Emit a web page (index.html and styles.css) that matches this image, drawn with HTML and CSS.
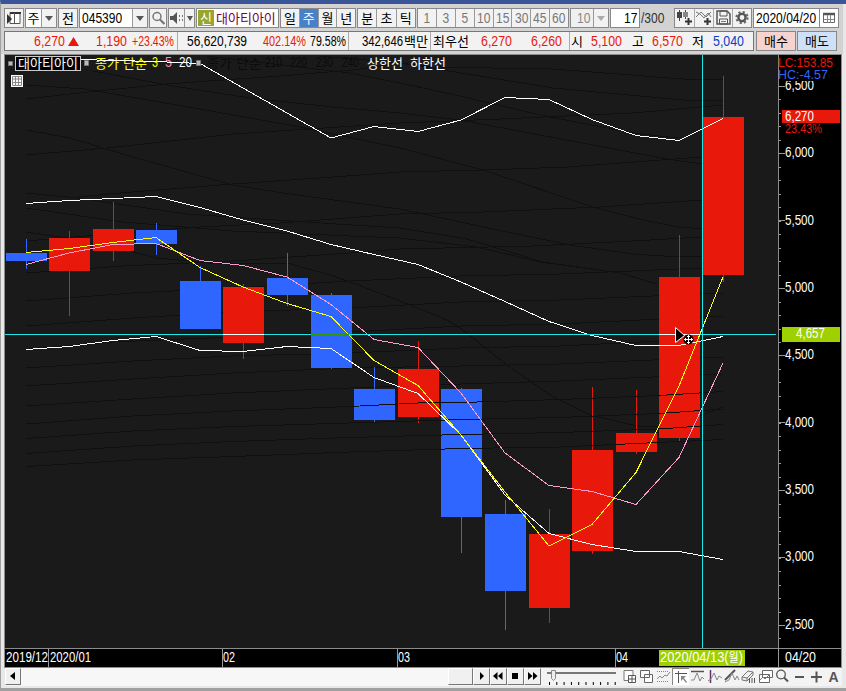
FILE: index.html
```html
<!DOCTYPE html>
<html lang="ko">
<head>
<meta charset="utf-8">
<title>대아티아이 주봉 차트</title>
<link rel="stylesheet" href="styles.css">
</head>
<body>
<div class="window">
  <header class="toolbar">
    <div class="box w20"><svg width="18" height="18"><path d="M5 3.500h10v11H5z" fill="#fff" stroke="#555"/><path d="M5 4h11" stroke="#333" stroke-width="2"/><path d="M9.500 4v10" stroke="#555"/><path d="M2 5l5 5-5 5z" fill="#333"/></svg></div>
    <div class="box combo w32"><span class="ko grow">주</span><span class="drop"></span></div>
    <div class="box w20"><span class="ko">전</span></div>
    <div class="box combo w69"><span class="grow num"><b>045390</b></span><span class="drop"></span></div>
    <div class="box w19"><svg width="16" height="16"><circle cx="7" cy="6.500" r="4" fill="none" stroke="#777" stroke-width="1.500"/><path d="M10 9.500l4.500 4.500" stroke="#777" stroke-width="2.200"/></svg></div>
    <div class="box combo w27 light"><svg class="grow" width="16" height="16"><path d="M1 6h3l4-4v12l-4-4H1z" fill="#555"/><path d="M10.500 5v6M13.500 5v6" stroke="#777" stroke-dasharray="2 2"/></svg><span class="drop slim"></span></div>
    <div class="box name"><span class="tag">신</span><span class="title">대아티아이</span></div>
    <div class="group period"><span>일</span><span class="on">주</span><span>월</span><span>년</span></div>
    <div class="group tick"><span>분</span><span>초</span><span>틱</span></div>
    <div class="group mins"><span><b>1</b></span><span><b>3</b></span><span><b>5</b></span><span><b>10</b></span><span><b>15</b></span><span><b>30</b></span><span><b>45</b></span><span><b>60</b></span></div>
    <div class="box combo off w39"><span class="grow num"><b>10</b></span><span class="drop"></span></div>
    <div class="box count"><b>17</b></div>
    <div class="total"><b>/300</b></div>
    <div class="group tools">
      <svg width="19" height="20"><path d="M4.500 2v11M10.500 2v9" stroke="#444"/><path d="M2 4h5v6H2z" fill="#444"/><path d="M8 4h5v5H8z" fill="#888"/><path d="M13.500 10v7M10 13.500h7" stroke="#333" stroke-width="2"/></svg>
      <svg width="19" height="20"><path d="M1 9l5-5 5 5 5-5M1 4l4 2 4 4 4-5 3 4" fill="none" stroke="#777"/><path d="M12.500 10v7M9 13.500h7" stroke="#333" stroke-width="2"/></svg>
      <svg width="19" height="20"><path d="M3 3h10l3 3v10H3z" fill="none" stroke="#555" stroke-width="1.500"/><path d="M6 3h7v5H6zM5.500 11h8v5h-8z" fill="none" stroke="#555"/><path d="M7 13.500h5" stroke="#777"/></svg>
      <svg width="19" height="20"><circle cx="9" cy="9.500" r="5.600" fill="none" stroke="#666" stroke-width="2" stroke-dasharray="2.200 2.200"/><circle cx="9" cy="9.500" r="3.600" fill="none" stroke="#555" stroke-width="2.400"/></svg>
    </div>
    <div class="box combo date"><span class="grow num"><b>2020/04/20</b></span><svg width="19" height="18"><path d="M3.500 4.500h11v9h-11z" fill="none" stroke="#666"/><path d="M3 5h12" stroke="#555" stroke-width="2.500"/><path d="M4 10.500h10M7.500 6v8M10.500 6v8" stroke="#888"/></svg></div>
  </header>

  <section class="quote">
    <div class="figures">
      <svg width="172" height="18"><g class="red"><text x="29" y="14" textLength="31" lengthAdjust="spacingAndGlyphs">6,270</text><path d="M63 14l5.500-9 5.500 9z"/><text x="91" y="14" textLength="31" lengthAdjust="spacingAndGlyphs">1,190</text><text x="127" y="14" textLength="42" lengthAdjust="spacingAndGlyphs">+23.43%</text></g></svg>
      <svg width="171" height="18"><text x="9" y="14" textLength="60" lengthAdjust="spacingAndGlyphs">56,620,739</text><text x="85" y="14" class="red" textLength="43" lengthAdjust="spacingAndGlyphs">402.14%</text><text x="132" y="14" textLength="36" lengthAdjust="spacingAndGlyphs">79.58%</text></svg>
      <svg width="82" height="18"><text x="13" y="14" textLength="41" lengthAdjust="spacingAndGlyphs">342,646</text><text x="55" y="14" class="kt" textLength="24">백만</text></svg>
      <svg width="139" height="18"><text x="2" y="14" class="kt">최우선</text><text x="50" y="14" class="red" textLength="31" lengthAdjust="spacingAndGlyphs">6,270</text><text x="100" y="14" class="red" textLength="31" lengthAdjust="spacingAndGlyphs">6,260</text></svg>
      <svg width="183" height="18"><text x="1" y="14" class="kt">시</text><text x="21" y="14" class="red" textLength="31" lengthAdjust="spacingAndGlyphs">5,100</text><text x="62" y="14" class="kt">고</text><text x="82" y="14" class="red" textLength="31" lengthAdjust="spacingAndGlyphs">6,570</text><text x="122" y="14" class="kt">저</text><text x="143" y="14" class="navy" textLength="31" lengthAdjust="spacingAndGlyphs">5,040</text></svg>
    </div>
    <div class="buy">매수</div>
    <div class="sell">매도</div>
  </section>

  <main class="chart">
  <svg width="838" height="614" viewBox="4 54 838 614">
    <rect x="4" y="54" width="838" height="614" fill="#8c8c8c"/>
    <rect x="5" y="55" width="773" height="593" fill="#1a1a1a"/>
    <rect x="779" y="55" width="62" height="593" fill="#000"/>
    <rect x="5" y="649" width="836" height="18" fill="#000"/>

    <g class="line faint">
      <path d="M26 85L85 89L200 109L300 127L400 148L483 170L593 207L643 220L678 227L703 229"/>
      <path d="M26 99L97 91L167 84L280 76L353 70L400 63L433 67L553 69L683 79L723 79"/>
      <path d="M93 71L173 86L250 98L333 107L400 113L460 120L593 145L667 159L702 164"/>
      <path d="M26 130L70 138L133 157L233 185L283 193L400 209L507 232L570 245L633 254L680 257L703 256"/>
      <path d="M26 155L107 148L233 134L400 123L500 119L633 113L723 105"/>
      <path d="M26 193L77 198L187 214L290 221L400 228L467 239L543 262L620 273L657 284"/>
      <path d="M26 208L123 222L233 231L350 236L400 238L477 247L540 262L620 273"/>
      <path d="M67 198L120 193L233 184L333 177L400 172L483 170L567 167L702 157"/>
      <path d="M26 241L110 234L200 227L280 223L400 214L483 212L600 207L702 200"/>
      <path d="M26 273L123 266L233 261L350 253L400 249L533 246L633 241L702 237"/>
      <path d="M207 56L350 73L400 83L460 96L540 115L633 133L678 138"/>
      <path d="M320 56L400 63L553 88L683 100L723 101"/>
      <path d="M26 232L80 240L133 252L157 258L220 264L287 263L330 275L350 282L400 301L447 320L463 330L507 365L550 395L590 415L637 426L660 427L700 416L723 407"/>
      <path d="M26 301L133 293L233 288L350 281L461 276L560 274L702 268"/>
      <path d="M26 326L133 318L233 312L350 308L461 302L560 300L723 293"/>
      <path d="M26 349L113 342L233 337L350 332L461 326L560 324L723 316"/>
      <path d="M26 368L133 361L233 356L350 353L461 348L560 346L723 338"/>
      <path d="M26 386L133 379L233 373L350 368L461 366L560 364L723 357"/>
      <path d="M26 406L133 399L233 393L350 388L461 384L560 381L723 374"/>
    </g>

    <g fill="#e8180a">
      <path d="M49 238h41v33H49zM93 229h41v22H93zM223 287h41v56h-41zM398 369h41v48h-41zM529 534h41v74h-41zM572 450h41v101h-41zM616 433h41v19h-41zM659 277h41v161h-41zM703 117h41v158h-41z"/>
      <path d="M69 231h1v85h-1zM113 202h1v59h-1zM243 284h1v75h-1zM418 341h1v82h-1zM549 509h1v114h-1zM592 387h1v167h-1zM636 390h1v64h-1zM679 235h1v206h-1zM723 76h1v206h-1z"/>
    </g>
    <g fill="#2f66ff">
      <path d="M6 253h41v8H6zM136 230h41v14h-41zM180 281h41v48h-41zM267 278h41v17h-41zM311 295h41v73h-41zM354 389h41v31h-41zM441 389h41v128h-41zM485 514h41v77h-41z"/>
      <path d="M26 239h1v30h-1zM156 223h1v32h-1zM200 266h1v15h-1zM287 253h1v53h-1zM331 293h1v76h-1zM374 367h1v55h-1zM461 388h1v165h-1zM505 500h1v130h-1z"/>
    </g>

    <g class="line faint">
      <path d="M26 424L133 416L233 411L350 406.500L418 403L461 402.500L560 399.500L659 395.500L723 391.500"/>
      <path d="M26 438.500L133 431L233 426.500L350 423L461 419.500L560 417.500L659 413.500L723 409"/>
      <path d="M26 453.500L133 446L233 441.500L350 437.500L461 434.500L560 432.500L659 429L723 424.500"/>
      <path d="M26 466.500L133 460L233 456.500L350 452L461 448.500L560 447L636 443.500L723 439.500"/>
    </g>

    <g class="kt">
      <rect x="15.500" y="56.500" width="65" height="14" fill="#000" stroke="#ccc"/>
      <text x="18" y="68" class="w" textLength="60">대아티아이</text>
      <text x="95" y="68" class="y" textLength="52">종가 단순</text>
      <text x="207" y="68" class="d" textLength="54">종가 단순</text>
      <text x="367" y="68" class="w">상한선</text>
      <text x="410" y="68" class="w">하한선</text>
    </g>
    <text x="152" y="67" class="y" textLength="6" lengthAdjust="spacingAndGlyphs">3</text>
    <text x="165" y="67" class="p" textLength="7" lengthAdjust="spacingAndGlyphs">5</text>
    <text x="179" y="67" class="w" textLength="13" lengthAdjust="spacingAndGlyphs">20</text>
    <g class="d"><text x="265" y="67" textLength="17" lengthAdjust="spacingAndGlyphs">210</text><text x="290" y="67" textLength="17" lengthAdjust="spacingAndGlyphs">220</text><text x="316" y="67" textLength="17" lengthAdjust="spacingAndGlyphs">230</text><text x="342" y="67" textLength="17" lengthAdjust="spacingAndGlyphs">240</text></g>

    <g class="line white">
      <path d="M81 59.500L113 60.500L156 61.500L200 63.500L243 88L331 138L374 126.500L418 131.500L461 120L505 97.500L549 99.500L592 119.500L636 135.500L679 140.500L723 118.500"/>
      <path d="M26 203.500L69 200.500L113 198.500L156 196.500L200 207.500L243 220L287 231L331 244.500L374 254.500L418 264.500L461 282L505 301.500L549 321.500L592 335.500L636 345.500L679 345.500L723 336.500"/>
      <path d="M26 349.500L69 346.500L113 340.500L156 336.500L200 350.500L243 351.500L287 346.500L331 348.500L374 377.500L418 393.500L461 435L505 495L549 533.500L592 544.500L636 551.500L679 551.500L723 559.500"/>
    </g>
    <path class="line pink" d="M26 264.500L69 253L113 244.500L156 243.500L200 260.500L243 265.500L287 277L331 304.500L374 339.500L418 347.500L461 393L505 453L549 485.500L592 491.500L636 504.500L679 457.500L723 363"/>
    <path class="line yellow" d="M26 252.500L69 248.500L113 242.500L156 237.500L200 267.500L243 287L287 303.500L331 316.500L374 360.500L418 385.500L461 435L505 492L549 546L592 524.500L636 472.500L679 386L723 277"/>
    <path d="M8.500 61.500h4v4h-4zM84.500 60.500h4v5h-4zM196.500 60.500h4v5h-4z" fill="#bbb" stroke="#777"/>

    <g shape-rendering="crispEdges">
      <path d="M5 334h771v1H5zM702 55h1v593h-1z" fill="#1ee6e6"/>
      <path d="M223 334h41v1h-41zM659 334h41v1h-41z" fill="#fff"/>
      <path d="M311 334h38v1h-38z" fill="#309a00"/>
    </g>
    <path d="M675.500 327.500v15l9-7z" fill="#000" stroke="#fff"/>
    <circle cx="688.500" cy="339.500" r="5" fill="#000"/>
    <path d="M684 339.500h9M688.500 335v9M687 336.500h3M687 342.500h3M685.500 338v3M691.500 338v3" stroke="#fff" shape-rendering="crispEdges"/>

    <g shape-rendering="crispEdges">
      <path d="M780 72.500V648" stroke="#999" stroke-width="2" stroke-dasharray="1 12.475"/>
      <path d="M782 85.500V648" stroke="#999" stroke-width="6" stroke-dasharray="1 66.375"/>
      <path d="M48 649h1v18h-1zM222 649h1v18h-1zM397 649h1v18h-1zM615 649h1v18h-1zM778 648h1v19h-1z" fill="#999"/>
    </g>
    <g class="white-text">
      <text x="785" y="90" textLength="29" lengthAdjust="spacingAndGlyphs">6,500</text>
      <text x="785" y="157" textLength="29" lengthAdjust="spacingAndGlyphs">6,000</text>
      <text x="785" y="225" textLength="29" lengthAdjust="spacingAndGlyphs">5,500</text>
      <text x="785" y="292" textLength="29" lengthAdjust="spacingAndGlyphs">5,000</text>
      <text x="785" y="359" textLength="29" lengthAdjust="spacingAndGlyphs">4,500</text>
      <text x="785" y="427" textLength="29" lengthAdjust="spacingAndGlyphs">4,000</text>
      <text x="785" y="494" textLength="29" lengthAdjust="spacingAndGlyphs">3,500</text>
      <text x="785" y="561" textLength="29" lengthAdjust="spacingAndGlyphs">3,000</text>
      <text x="785" y="629" textLength="29" lengthAdjust="spacingAndGlyphs">2,500</text>
      <rect x="779" y="68" width="62" height="13" fill="#000"/>
      <rect x="782" y="110" width="58" height="13" fill="#e8180a"/>
      <text x="785" y="121" textLength="29" lengthAdjust="spacingAndGlyphs">6,270</text>
      <rect x="782" y="327" width="58" height="15" fill="#9fd000"/>
      <text x="796" y="338" textLength="29" lengthAdjust="spacingAndGlyphs">4,657</text>
      <text x="6" y="662" textLength="42" lengthAdjust="spacingAndGlyphs">2019/12</text>
      <text x="50" y="662" textLength="41" lengthAdjust="spacingAndGlyphs">2020/01</text>
      <text x="223" y="662" textLength="12" lengthAdjust="spacingAndGlyphs">02</text>
      <text x="398" y="662" textLength="12" lengthAdjust="spacingAndGlyphs">03</text>
      <text x="616" y="662" textLength="12" lengthAdjust="spacingAndGlyphs">04</text>
      <rect x="659" y="650" width="86" height="16" fill="#9fd000"/>
      <text x="660" y="662" textLength="83" lengthAdjust="spacingAndGlyphs">2020/04/13(<tspan class="day">월</tspan>)</text>
      <text x="785" y="662" textLength="31" lengthAdjust="spacingAndGlyphs">04/20</text>
    </g>
    <text x="778" y="67" class="red tight" textLength="55" lengthAdjust="spacingAndGlyphs">LC:153.85</text>
    <text x="778" y="79" class="sky tight" textLength="50" lengthAdjust="spacingAndGlyphs">HC:-4.57</text>
    <text x="785" y="133" class="red tight" textLength="37" lengthAdjust="spacingAndGlyphs">23.43%</text>

    <rect x="11" y="75" width="12" height="12" fill="#fff"/>
    <path d="M12.500 76.500h9v9h-9zM12 79h10M12 82.500h10M15.500 76v10M18.500 76v10" fill="none" stroke="#888"/>
  </svg>
  </main>

  <footer class="bottom">
    <div class="key w16"><svg width="14" height="14"><path d="M9 3v8L4 7z"/></svg></div>
    <div class="track"></div>
    <div class="key w24"></div>
    <div class="key w17"><svg width="14" height="14"><path d="M6 3v8l4-4z"/></svg></div>
    <div class="key w17"><svg width="14" height="14"><path d="M6.500 3v8L2 7zM11.500 3v8L7 7z"/></svg></div>
    <div class="key w17"><svg width="14" height="14"><path d="M4 4h6v6H4z"/></svg></div>
    <div class="key w17"><svg width="14" height="14"><path d="M3 3v8l4.500-4zM8 3v8l4.500-4z"/></svg></div>
    <svg width="80" height="18"><path d="M6 5h69" stroke="#777" stroke-width="2"/><path d="M8 15.500h68" stroke="#000" stroke-width="3" stroke-dasharray="1 6.300"/><path d="M10.500 2.500h4v8l-2 2-2-2z" fill="#eee" stroke="#888"/></svg>
    <div class="icons">
      <svg width="17" height="17"><path d="M3 2.500h9v10H3z" fill="#fff" stroke="#777"/><path d="M7.500 7.500h7v7h-7zM11 8v7M8 11h7" fill="#fff" stroke="#555"/></svg>
      <svg width="17" height="17"><path d="M2.500 2.500h9v7h-9zM6.500 6.500h8v8h-8z" fill="#fff" stroke="#666"/></svg>
      <svg width="17" height="17"><path d="M2 3.500h12M2 13.500h12" stroke="#888" stroke-dasharray="1 1"/><path d="M2 11l3-3 2 2 3-3 2 1 3-4" fill="none" stroke="#888"/></svg>
      <svg width="17" height="17" class="down"><path d="M2 4.500h12M5.500 2v12" stroke="#555"/><path d="M8 7h5l-2 2 3 4-1 1-3-4-2 2z" fill="#888"/></svg>
      <svg width="17" height="17"><path d="M2 3.500h13" stroke="#555" stroke-width="1.500"/><path d="M2 12h3l3-7 3 8 2-4 2 2" fill="none" stroke="#888"/></svg>
      <svg width="17" height="17"><path d="M4.500 2v13" stroke="#636" stroke-width="1.500"/><path d="M2 13l3-2 3-6 3 7 2-4 3 2" fill="none" stroke="#888"/></svg>
      <svg width="17" height="17"><path d="M2 12L12 2" stroke="#555" stroke-width="2"/><path d="M2 14l4-2 3-7 3 7 2-4 2 4" fill="none" stroke="#888"/></svg>
      <svg width="17" height="17"><path d="M2 9l6-6 5 1v3l-6 6-5-1zM2 9l5 1 6-6M7 10v3" fill="#eee" stroke="#777"/><path d="M9.500 10v5M12 10v5M14.500 10v5" stroke="#555"/></svg>
      <svg width="17" height="17"><path d="M5.500 2.500h10v7h-10zM2.500 6.500h10v8h-10z" fill="#fff" stroke="#666"/><path d="M3 12l3-3 2 2 4-4" fill="none" stroke="#777"/></svg>
      <svg width="17" height="17"><circle cx="7" cy="6.500" r="4.300" fill="none" stroke="#555" stroke-width="1.300"/><path d="M10 9.500l4 4" stroke="#555" stroke-width="2"/></svg>
      <svg width="17" height="17"><path d="M4 9h9" stroke="#555" stroke-width="2"/></svg>
      <svg width="17" height="17"><path d="M3 9h11M8.500 3.500v11" stroke="#555" stroke-width="2"/></svg>
      <span class="letter">A</span>
    </div>
  </footer>
</div>
</body>
</html>
```

FILE: styles.css
```css
* { box-sizing: border-box; }
body { margin: 0; width: 846px; height: 691px; overflow: hidden; background: #a0a0a0; font-family: "Liberation Sans", "Noto Sans CJK KR", sans-serif; font-size: 14px; color: #000; }
svg { display: block; flex: none; }
text { font-size: 14px; white-space: pre; }
.window { width: 846px; height: 688px; border-top: 4px solid #3a5698; border-left: 1px solid #a0a0a0; background: #e8e8e8; }

.toolbar { display: flex; height: 27px; padding: 4px 0 0 3px; margin-right: 3px; background: #d2d2d2; align-items: flex-start; }
.toolbar > * { flex: none; margin-right: 1px; }
.toolbar b { display: inline-block; font-weight: 400; transform: scaleX(.86); }
.box, .group { display: flex; height: 20px; border: 1px solid #888; background: #f2f2f2; align-items: center; justify-content: center; line-height: 18px; overflow: hidden; }
.combo { background: #fff; justify-content: flex-start; }
.light { background: #f2f2f2; }
.grow { flex: 1; min-width: 0; text-align: center; white-space: nowrap; }
.ko, .group, .tag, .title, .buy, .sell { font-family: "Noto Sans CJK KR", sans-serif; font-size: 13px; }
.num b { transform-origin: left; margin-left: 2px; }
.num { text-align: left; }
.drop { width: 15px; height: 18px; flex: none; border-left: 1px solid #999; background: #f2f2f2; display: flex; align-items: center; justify-content: center; }
.drop::after { content: ""; border: 4px solid transparent; border-top: 5px solid #555; border-bottom: 0; }
.slim { width: 10px; }
.slim::after { border-left-width: 3px; border-right-width: 3px; }
.w16 { width: 16px; } .w17 { width: 17px; } .w19 { width: 18px; } .w20 { width: 20px; } .w24 { width: 25px; } .w27 { width: 27px; } .w32 { width: 32px; } .w39 { width: 39px; } .w69 { width: 69px; }
.name { width: 83px; justify-content: flex-start; background: #fff; }
.tag { width: 16px; height: 16px; line-height: 16px; background: #98a52e; color: #fff; text-align: center; margin: 0 2px 0 1px; flex: none; }
.title { color: #7b0040; white-space: nowrap; }
.group > span { flex: 1; height: 18px; border-left: 1px solid #999; text-align: center; }
.group > :first-child { border-left: 0; }
.period { width: 76px; }
.group > .on { background: #4a80c8; color: #fff; }
.tick { width: 59px; }
.mins { width: 152px; color: #777; font-family: "Liberation Sans", sans-serif; font-size: 14px; }
.off { color: #888; background: #f0f0f0; }
.off .num { padding-left: 4px; }
.off .drop::after { border-top-color: #aaa; }
.count { width: 30px; background: #fff; justify-content: flex-end; }
.total { width: 32px; line-height: 20px; color: #333; height: 20px; }
.total b { transform-origin: left; }
.tools { width: 78px; }
.tools svg { border-left: 1px solid #aaa; }
.date { width: 86px; }
.date svg { border-left: 1px solid #888; }

.quote { display: flex; height: 23px; padding-left: 3px; margin-right: 3px; background: #d2d2d2; align-items: flex-start; }
.figures { display: flex; width: 750px; height: 20px; border: 1px solid #777; background: #f2f2f2; }
.figures svg + svg { border-left: 1px solid #aaa; }
.buy, .sell { height: 20px; border: 1px solid #888; line-height: 18px; text-align: center; }
.buy { width: 40px; margin-left: 2px; background: #f7d3cf; }
.sell { width: 40px; margin-left: 1px; background: #cfe1f7; }
.kt { font-family: "Noto Sans CJK KR", sans-serif; font-size: 13px; }
.kt text { font-size: 13px; }
text.kt { font-size: 13px; }
.tight { font-size: 13px; }
.day { font-size: 12px; }
.red { fill: #e8180a; }
.navy { fill: #0a3cc8; }
.sky { fill: #2f66ff; }

.chart { margin-left: 3px; height: 614px; }
.line { fill: none; stroke-width: 1; shape-rendering: crispEdges; }
.faint { stroke: #101010; }
.white { stroke: #fff; }
.pink { stroke: #ff9bcd; }
.yellow { stroke: #ff0; }
.white-text, .w { fill: #fff; }
.y { fill: #ff0; }
.p { fill: #ff86c4; }
.d { fill: #0b0b0b; }

.bottom { display: flex; height: 18px; margin-left: 4px; width: 837px; background: #f3f3f3; }
.key { flex: none; height: 17px; background: #f0f0f0; border: 1px solid #fff; border-right-color: #777; border-bottom-color: #777; }
.track { width: 427px; background: #f7f7f7; }
.icons { display: flex; }
.down { background: #fff; border-left: 1px solid #888; border-top: 1px solid #888; }
.letter { width: 17px; text-align: center; font-weight: 700; color: #555; line-height: 18px; }
```
